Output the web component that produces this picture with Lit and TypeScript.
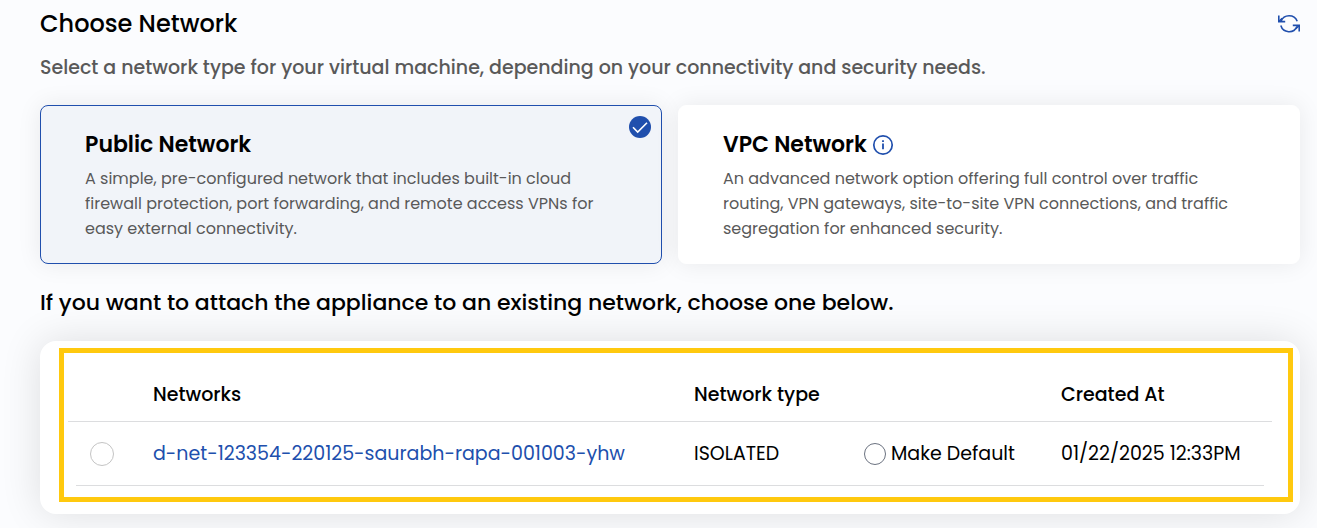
import { LitElement, html, css } from "lit";
import { customElement, state } from "lit/decorators.js";

interface Network {
  name: string;
  type: string;
  created: string;
}

@customElement("app-root")
export class AppRoot extends LitElement {
  static styles = css`
    :host {
      display: block;
      box-sizing: border-box;
      min-height: 100vh;
      padding: 8px 17px 14px 40px;
      overflow: hidden;
      background: #fbfcfe;
      color: #000;
      font-family: Poppins, Inter, sans-serif;
    }
    *,
    *::before,
    *::after {
      box-sizing: border-box;
    }
    .head {
      display: flex;
      justify-content: space-between;
      align-items: center;
    }
    h1,
    h2,
    p {
      margin: 0;
      font-weight: 500;
    }
    h1 {
      font-size: 24px;
      line-height: 32px;
    }
    .refresh {
      display: flex;
      padding: 0;
      border: 0;
      background: none;
      color: #204fad;
      cursor: pointer;
    }
    .lead {
      margin-top: 12px;
      color: #595959;
      font-size: 19px;
      line-height: 32px;
    }
    .cards {
      display: grid;
      grid-template-columns: 1fr 1fr;
      gap: 16px;
      margin-top: 21px;
    }
    .card {
      position: relative;
      display: flex;
      flex-direction: column;
      gap: 5px;
      padding: 23px 44px 22px;
      border: 1px solid #fff;
      border-radius: 8px;
      background: #fff;
      box-shadow: 0 0 24px rgba(0, 0, 0, 0.08);
      color: inherit;
      font: inherit;
      text-align: left;
      cursor: pointer;
    }
    .card.selected {
      border-color: #204fad;
      background: #f1f4f9;
    }
    .name {
      display: flex;
      align-items: center;
      gap: 5px;
      font-size: 22px;
      font-weight: 600;
      line-height: 32px;
    }
    .info {
      color: #204fad;
    }
    .desc {
      color: #595959;
      font-size: 16px;
      line-height: 25px;
    }
    .tick {
      position: absolute;
      top: 10px;
      right: 10px;
    }
    h2 {
      margin-top: 23px;
      font-size: 22px;
      line-height: 32px;
    }
    .panel {
      margin-top: 22px;
      padding: 7px 7px 12px 19px;
      border-radius: 16px;
      background: #fff;
      box-shadow: 0 0 40px rgba(0, 0, 0, 0.12);
    }
    .frame {
      padding: 16px 16px 11px 4px;
      border: 5px solid #ffc90e;
    }
    table {
      width: 100%;
      table-layout: fixed;
      border-collapse: separate;
      border-spacing: 0;
      font-size: 19px;
      line-height: 24px;
      white-space: nowrap;
    }
    .c-pick {
      width: 69px;
    }
    .c-type {
      width: 170px;
    }
    .c-default {
      width: 197px;
    }
    .c-created {
      width: 227px;
    }
    th,
    td {
      padding: 0 16px 1px;
      background: linear-gradient(#dcdddf, #dcdddf) left bottom / 100% 1px no-repeat;
      text-align: left;
      vertical-align: middle;
    }
    th {
      height: 53px;
      font-weight: 500;
    }
    td {
      height: 64px;
    }
    td:first-child {
      background-position: right bottom;
      background-size: calc(100% - 8px) 1px;
    }
    td:last-child {
      background-size: calc(100% - 8px) 1px;
    }
    .pick {
      padding-left: 22px;
    }
    a {
      color: #204fad;
      text-decoration: none;
    }
    input {
      appearance: none;
      display: block;
      flex: none;
      width: 22px;
      height: 22px;
      margin: 0;
      border: 1px solid #6b7280;
      border-radius: 50%;
      background: #fff;
    }
    .pick input {
      width: 24px;
      height: 24px;
      border-color: #c4c4c4;
    }
    input:checked {
      border: 6px solid #204fad;
    }
    label {
      display: flex;
      align-items: center;
      gap: 5px;
    }
  `;

  @state() private kind = "public";

  private networks: Network[] = [
    {
      name: "d-net-123354-220125-saurabh-rapa-001003-yhw",
      type: "ISOLATED",
      created: "01/22/2025 12:33PM",
    },
  ];

  private card(id: string, name: string, desc: string, info = false) {
    const on = this.kind === id;
    return html`
      <button
        class="card ${on ? "selected" : ""}"
        type="button"
        aria-pressed=${on ? "true" : "false"}
        @click=${() => (this.kind = id)}
      >
        <span class="name">
          ${name}
          ${info
            ? html`<svg class="info" width="22" height="22" viewBox="0 0 22 22" fill="none" stroke="currentColor" stroke-width="1.8" aria-hidden="true">
                <circle cx="11" cy="11" r="9.2" stroke-width="1.7" />
                <path d="M11 9.6v5.6M11 6.3v1.8" />
              </svg>`
            : ""}
        </span>
        <span class="desc">${desc}</span>
        ${on
          ? html`<svg class="tick" width="22" height="22" viewBox="0 0 22 22" fill="none" aria-hidden="true">
              <circle cx="11" cy="11" r="11" fill="#204fad" />
              <path d="M4 11.2l4.7 4.8L18 6.7" stroke="#fff" stroke-width="1.6" />
            </svg>`
          : ""}
      </button>
    `;
  }

  render() {
    return html`
      <header class="head">
        <h1>Choose Network</h1>
        <button class="refresh" type="button" aria-label="Refresh networks">
          <svg width="22" height="20" viewBox="0 0 22 20" fill="none" stroke="currentColor" stroke-width="1.6" aria-hidden="true">
            <path d="M19.2 7.2A8.7 8.7 0 0 0 3 7.3M.8 1.4v6.2h6.4" />
            <path d="M2.8 11.6A8.7 8.7 0 0 0 19 12.7M21.2 17.6v-6.2h-6.4" />
            <path d="M1 7.4l3.2-3.2M21 11.6l-3.2 3.2" />
          </svg>
        </button>
      </header>
      <p class="lead">
        Select a network type for your virtual machine, depending on your connectivity and security needs.
      </p>
      <section class="cards">
        ${this.card(
          "public",
          "Public Network",
          "A simple, pre-configured network that includes built-in cloud firewall protection, port forwarding, and remote access VPNs for easy external connectivity."
        )}
        ${this.card(
          "vpc",
          "VPC Network",
          "An advanced network option offering full control over traffic routing, VPN gateways, site-to-site VPN connections, and traffic segregation for enhanced security.",
          true
        )}
      </section>
      <h2>If you want to attach the appliance to an existing network, choose one below.</h2>
      <section class="panel">
        <div class="frame">
          <table>
            <colgroup>
              <col class="c-pick" />
              <col />
              <col class="c-type" />
              <col class="c-default" />
              <col class="c-created" />
            </colgroup>
            <thead>
              <tr>
                <th></th>
                <th scope="col">Networks</th>
                <th scope="col">Network type</th>
                <th></th>
                <th scope="col">Created At</th>
              </tr>
            </thead>
            <tbody>
              ${this.networks.map(
                (n, i) => html`
                  <tr>
                    <td class="pick"><input type="radio" name="network" aria-label=${n.name} /></td>
                    <td><a href="#">${n.name}</a></td>
                    <td>${n.type}</td>
                    <td>
                      <label for="default-${i}">
                        <input id="default-${i}" type="radio" name="default" />Make Default
                      </label>
                    </td>
                    <td>${n.created}</td>
                  </tr>
                `
              )}
            </tbody>
          </table>
        </div>
      </section>
    `;
  }
}
